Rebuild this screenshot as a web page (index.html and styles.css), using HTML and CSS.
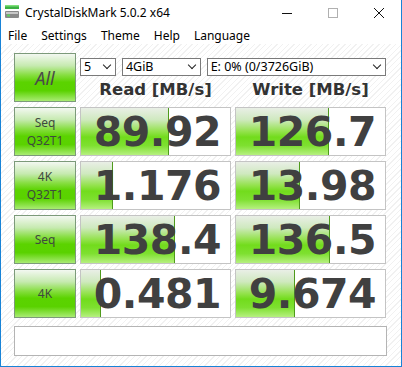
FILE: index.html
```html
<!DOCTYPE html>
<html lang="en">
<head>
  <meta charset="UTF-8">
  <title>CrystalDiskMark 5.0.2 x64</title>
  <link rel="stylesheet" href="styles.css">
</head>
<body>
  <div class="window">
    <div class="titlebar">
      <svg class="app-icon" width="16" height="16" viewBox="0 0 16 16">
        <rect x="1" y="1" width="14" height="4" fill="#3cb043"/>
        <rect x="1" y="1" width="14" height="1.5" fill="#7fe07a"/>
        <rect x="1" y="7" width="14" height="7" rx="1" fill="#8a8a8a"/>
        <rect x="2" y="8" width="12" height="2" fill="#c8c8c8"/>
        <rect x="3" y="10.5" width="3" height="2" fill="#5fd35f"/>
      </svg>
      <span class="title">CrystalDiskMark 5.0.2 x64</span>
      <div class="controls">
        <svg width="46" height="26" viewBox="0 0 46 26"><line x1="18" y1="13.5" x2="28" y2="13.5" stroke="#111" stroke-width="1"/></svg>
        <svg width="46" height="26" viewBox="0 0 46 26"><rect x="18.5" y="8.5" width="9" height="9" fill="none" stroke="#b0b0b0" stroke-width="1"/></svg>
        <svg width="46" height="26" viewBox="0 0 46 26"><path d="M18 8 L28 18 M28 8 L18 18" stroke="#111" stroke-width="1"/></svg>
      </div>
    </div>
    <div class="menubar">
      <span>File</span>
      <span>Settings</span>
      <span>Theme</span>
      <span>Help</span>
      <span>Language</span>
    </div>

    <div class="content">
      <div class="grid">
        <button class="label-btn all-btn">All</button>
        <div class="top-right">
          <div class="selects">
            <div class="select sel-count">5<span class="chev"></span></div>
            <div class="select sel-size">4GiB<span class="chev"></span></div>
            <div class="select sel-drive">E: 0% (0/3726GiB)<span class="chev"></span></div>
          </div>
          <div class="headers">
            <div class="col-head">Read [MB/s]</div>
            <div class="col-head">Write [MB/s]</div>
          </div>
        </div>

        <button class="label-btn">Seq<br>Q32T1</button>
        <div class="value"><div class="bar" style="width: 87px"></div><span>89.92</span></div>
        <div class="value"><div class="bar" style="width: 92px"></div><span>126.7</span></div>

        <button class="label-btn">4K<br>Q32T1</button>
        <div class="value"><div class="bar" style="width: 31px"></div><span>1.176</span></div>
        <div class="value"><div class="bar" style="width: 63px"></div><span>13.98</span></div>

        <button class="label-btn">Seq</button>
        <div class="value"><div class="bar" style="width: 93px"></div><span>138.4</span></div>
        <div class="value"><div class="bar" style="width: 93px"></div><span>136.5</span></div>

        <button class="label-btn">4K</button>
        <div class="value"><div class="bar" style="width: 19px"></div><span>0.481</span></div>
        <div class="value"><div class="bar" style="width: 58px"></div><span>9.674</span></div>
      </div>
      <div class="status"></div>
    </div>
  </div>
</body>
</html>
```

FILE: styles.css
```css
body {
  margin: 0;
  padding: 0;
  font-family: "Noto Sans", "Open Sans", sans-serif;
  background-color: #ffffff;
}
.window {
  width: 402px;
  height: 367px;
  box-sizing: border-box;
  border: 1px solid #1883d7;
  border-top: none;
  display: flex;
  flex-direction: column;
  background-color: #ffffff;
}
.titlebar {
  height: 26px;
  display: flex;
  align-items: center;
  color: #000;
}
.app-icon {
  margin-left: 3px;
  margin-top: -2px;
}
.title {
  margin-left: 5px;
  font-size: 12px;
  margin-top: -1px;
}
.controls {
  margin-left: auto;
  display: flex;
  margin-right: -1px;
  align-self: flex-start;
}
.controls svg {
  display: block;
}
.menubar {
  height: 18px;
  display: flex;
  align-items: center;
  font-size: 12px;
  padding-left: 7px;
  gap: 14px;
}
.content {
  flex: 1;
  padding: 9px 13px 0 13px;
  background-color: #ffffff;
  background-image: repeating-linear-gradient(135deg, #ffffff 0, #ffffff 3px, #f1f1f1 3px, #f1f1f1 4px);
}
.grid {
  display: grid;
  grid-template-columns: 62px 151px 151px;
  grid-template-rows: 49px 50px 50px 50px 50px;
  column-gap: 4px;
  row-gap: 4px;
}
.label-btn {
  margin: 0;
  padding: 0;
  border: 1px solid #7c9a7a;
  background: linear-gradient(180deg, #f3f8f1 0%, #c6eab0 25%, #86de40 45%, #5bd300 60%, #5ad200 78%, #a9ec73 100%);
  font-family: "Noto Sans", "Open Sans", sans-serif;
  font-size: 12px;
  line-height: 18px;
  color: #3e4a3e;
}
.all-btn {
  font-size: 18px;
  font-style: italic;
  color: #4a4a4a;
}
.grid > .label-btn:not(.all-btn) {
  margin-top: 1px;
}
.top-right {
  grid-column: 2 / 4;
  display: flex;
  flex-direction: column;
}
.selects {
  display: flex;
  gap: 6px;
  margin-top: 5px;
}
.select {
  position: relative;
  height: 18px;
  box-sizing: border-box;
  border: 1px solid #7a7a7a;
  background: #ffffff;
  font-size: 12.5px;
  line-height: 16px;
  padding-left: 3px;
  color: #000;
}
.sel-count {
  width: 36px;
}
.sel-size {
  width: 79px;
}
.sel-drive {
  width: 180px;
}
.chev {
  position: absolute;
  right: 5px;
  top: 3px;
  width: 5px;
  height: 5px;
  border-right: 1.5px solid #222;
  border-bottom: 1.5px solid #222;
  transform: rotate(45deg);
}
.headers {
  display: flex;
  gap: 4px;
}
.col-head {
  width: 151px;
  text-align: center;
  font-family: "DejaVu Sans", Verdana, sans-serif;
  font-weight: bold;
  font-size: 16.5px;
  line-height: 24px;
  margin-top: 2px;
  color: #333333;
}
.value {
  position: relative;
  box-sizing: border-box;
  border: 1px solid #c4c4c4;
  background: #ffffff;
  overflow: hidden;
  display: flex;
  align-items: center;
  justify-content: flex-end;
  padding-right: 9px;
  margin-top: 1px;
}
.bar {
  position: absolute;
  left: 0;
  top: 0;
  bottom: 0;
  background: linear-gradient(180deg, #e9efe6 0%, #cfe9bf 25%, #93e24c 50%, #72dc1c 62%, #7ee030 80%, #b6f080 100%);
  border-right: 1px solid #4f9a1c;
}
.value span {
  position: relative;
  font-family: "DejaVu Sans", Verdana, sans-serif;
  font-weight: bold;
  font-size: 41px;
  line-height: 40px;
  color: #404040;
  letter-spacing: -0.5px;
}
.status {
  margin-top: 8px;
  width: 373px;
  height: 30px;
  box-sizing: border-box;
  border: 1px solid #b4b4b4;
  background: #ffffff;
}
```
